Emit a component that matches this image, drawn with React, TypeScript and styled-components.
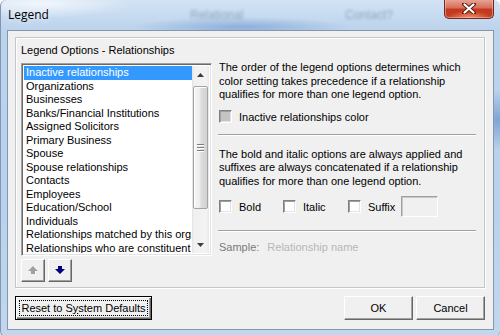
import React from 'react'
import styled, { createGlobalStyle } from 'styled-components'

const GlobalStyle = createGlobalStyle`
  html, body {
    margin: 0;
    padding: 0;
    overflow: hidden;
    background: #ffffff;
  }
  body {
    font-family: "Liberation Sans", Arial, sans-serif;
    font-size: 11px;
    color: #000;
  }
`

const items = [
  'Inactive relationships',
  'Organizations',
  'Businesses',
  'Banks/Financial Institutions',
  'Assigned Solicitors',
  'Primary Business',
  'Spouse',
  'Spouse relationships',
  'Contacts',
  'Employees',
  'Education/School',
  'Individuals',
  'Relationships matched by this org.',
  'Relationships who are constituent',
]

const Window = styled.div`
  width: 500px;
  height: 338px;
  box-sizing: border-box;
  display: flex;
  flex-direction: column;
  border-radius: 6px 6px 7px 7px;
  border-left: 1px solid #7e97b4;
  border-bottom: 1px solid #4e6581;
  background:
    radial-gradient(ellipse 110px 10px at 240px 27px, rgba(80, 130, 195, 0.45), transparent),
    radial-gradient(ellipse 90px 14px at 40px 4px, rgba(255, 255, 255, 0.7), transparent),
    radial-gradient(ellipse 60px 30px at 497px 120px, rgba(70, 120, 190, 0.5), transparent),
    linear-gradient(#d3e3f4, #bcd3ec 30px, #b9d1eb 200px, #c2d7ee);
  overflow: hidden;
`

const TitleBar = styled.div`
  height: 30px;
  flex: none;
  display: flex;
  align-items: flex-start;
`

const TitleText = styled.div`
  font-family: "Open Sans", "Noto Sans", sans-serif;
  font-size: 12px;
  line-height: 16px;
  padding: 7px 0 0 7px;
  width: 182px;
  color: #000;
  text-shadow: 0 0 6px rgba(255, 255, 255, 0.9);
`

const GhostText = styled.div<{ $width: number }>`
  width: ${p => p.$width}px;
  padding-top: 8px;
  font-size: 12px;
  color: #51647c;
  opacity: 0.45;
  filter: blur(1.4px);
`

const CloseButton = styled.div`
  margin-left: auto;
  margin-right: 6px;
  margin-top: -1px;
  width: 50px;
  height: 20px;
  box-sizing: border-box;
  border: 1px solid #6d2b22;
  border-top: none;
  border-radius: 0 0 5px 5px;
  background:
    radial-gradient(ellipse 22px 7px at 50% 100%, rgba(255, 170, 120, 0.8), transparent),
    linear-gradient(#e9a99a, #d86f5c 45%, #c4391f 55%, #c53d25);
  box-shadow: inset 0 0 0 1px rgba(255, 210, 200, 0.45);
  display: flex;
  align-items: center;
  justify-content: center;
`

const Client = styled.div`
  flex: 1;
  margin: 0 6px 7px 6px;
  border: 1px solid #8497ae;
  background: #f0f0f0;
  display: flex;
  flex-direction: column;
  padding: 6px 8px 0 7px;
`

const GroupBox = styled.div`
  height: 251px;
  box-sizing: border-box;
  border: 1px solid #c3c7cb;
  box-shadow: inset 1px 1px #ffffff, 1px 1px #ffffff;
  padding: 5px 8px 0 5px;
  display: flex;
  flex-direction: column;
`

const GroupLabel = styled.div`
  line-height: 14px;
  height: 14px;
`

const GroupBody = styled.div`
  margin-top: 4px;
  display: flex;
  gap: 6px;
`

const LeftColumn = styled.div`
  width: 191px;
  display: flex;
  flex-direction: column;
  padding-top: 2px;
`

const ListBox = styled.div`
  height: 193px;
  box-sizing: border-box;
  border: 1px solid;
  border-color: #a0a0a0 #ffffff #ffffff #a0a0a0;
  box-shadow: inset 1px 1px #696969, inset -1px -1px #e3e3e3;
  background: #fff;
  padding: 2px;
  display: flex;
`

const ListItems = styled.div`
  width: 170px;
  overflow: hidden;
`

const ListItem = styled.div<{ $selected?: boolean }>`
  height: 13.5px;
  line-height: 13.5px;
  padding-left: 2px;
  white-space: nowrap;
  overflow: hidden;
  background: ${p => (p.$selected ? '#3399ff' : 'transparent')};
  color: ${p => (p.$selected ? '#ffffff' : '#000000')};
`

const ScrollBar = styled.div`
  width: 17px;
  display: flex;
  flex-direction: column;
  background: linear-gradient(to right, #e3e3e3, #f0f0f0 2px, #f3f3f3 14px, #e8e8e8);
`

const ScrollArrow = styled.div`
  height: 17px;
  flex: none;
  display: flex;
  align-items: center;
  justify-content: center;
`

const ScrollTrack = styled.div`
  flex: 1;
  padding: 3px 1px 0 1px;
`

const ScrollThumb = styled.div`
  height: 123px;
  box-sizing: border-box;
  border: 1px solid #a3a3a3;
  border-radius: 2px;
  background: linear-gradient(to right, #f7f7f7, #ececec 45%, #dcdcdc 55%, #d2d2d2);
  box-shadow: inset 1px 1px #ffffff;
  display: flex;
  flex-direction: column;
  align-items: center;
  justify-content: center;
  gap: 2px;
`

const Grip = styled.div`
  width: 7px;
  height: 1px;
  background: #7d7d7d;
  box-shadow: 0 1px #ffffff;
`

const MoveButtons = styled.div`
  margin-top: 3px;
  display: flex;
  gap: 3px;
`

const MoveButton = styled.div`
  width: 24px;
  height: 23px;
  box-sizing: border-box;
  border: 1px solid;
  border-color: #ffffff #696969 #696969 #ffffff;
  box-shadow: inset -1px -1px #a0a0a0, inset 1px 1px #f0f0f0;
  background: #f0f0f0;
  display: flex;
  align-items: center;
  justify-content: center;
`

const RightColumn = styled.div`
  flex: 1;
  display: flex;
  flex-direction: column;
`

const Paragraph = styled.div<{ $top?: number }>`
  margin-top: ${p => p.$top ?? 0}px;
  line-height: 13.6px;
  padding-left: 1px;
`

const CheckRow = styled.div<{ $top: number; $height: number }>`
  margin-top: ${p => p.$top}px;
  height: ${p => p.$height}px;
  display: flex;
  align-items: center;
  padding-left: 1px;
`

const CheckItem = styled.div<{ $width?: number }>`
  width: ${p => (p.$width ? `${p.$width}px` : 'auto')};
  display: flex;
  align-items: center;
  gap: 7px;
`

const CheckBox = styled.div<{ $disabled?: boolean }>`
  width: 13px;
  height: 13px;
  box-sizing: border-box;
  border: 1px solid;
  border-color: #808080 #ffffff #ffffff #808080;
  box-shadow: inset 1px 1px #a0a0a0, inset -1px -1px #e3e3e3;
  background: ${p => (p.$disabled ? '#c4c4c4' : '#ffffff')};
`

const Separator = styled.div<{ $top: number }>`
  margin-top: ${p => p.$top}px;
  height: 1px;
  background: #a0a0a0;
  border-bottom: 1px solid #ffffff;
`

const SuffixInput = styled.div`
  margin-left: 6px;
  width: 37px;
  height: 21px;
  box-sizing: border-box;
  border: 1px solid;
  border-color: #a0a0a0 #ffffff #ffffff #a0a0a0;
  box-shadow: inset 1px 1px #c8c8c8;
  background: #f0f0f0;
`

const SampleRow = styled.div`
  margin-top: 8.5px;
  line-height: 13.6px;
  padding-left: 1px;
  display: flex;
  gap: 8px;
`

const SampleLabel = styled.span`
  color: #7a7a7a;
`

const SampleValue = styled.span`
  color: #b7b7b7;
`

const Footer = styled.div`
  margin-top: 8px;
  display: flex;
  align-items: center;
`

const Button = styled.div<{ $width: number; $default?: boolean }>`
  width: ${p => p.$width}px;
  height: 24px;
  box-sizing: border-box;
  border: 1px solid;
  border-color: ${p => (p.$default ? '#000000' : '#ffffff #696969 #696969 #ffffff')};
  box-shadow: ${p =>
    p.$default
      ? 'inset 1px 1px #ffffff, inset -1px -1px #696969, inset -2px -2px #a0a0a0'
      : 'inset -1px -1px #a0a0a0, inset 1px 1px #f0f0f0'};
  background: #f0f0f0;
  display: flex;
  align-items: center;
  justify-content: center;
  padding: 3px;
  & + & {
    margin-left: 3px;
  }
`

const FocusRect = styled.div`
  flex: 1;
  align-self: stretch;
  border: 1px dotted #000;
  display: flex;
  align-items: center;
  justify-content: center;
  line-height: 13px;
`

const Mnemonic = styled.span`
  text-decoration: underline;
`

const Spacer = styled.div`
  flex: 1;
`

const Arrow = ({ dir, color, glow }: { dir: 'up' | 'down'; color: string; glow?: boolean }) => (
  <svg width="11" height="9" viewBox="0 0 11 9">
    {glow && (
      <polygon
        points={dir === 'up' ? '4,8 8,8 8,5 11,5 6,0 1,5 4,5' : '4,1 8,1 8,4 11,4 6,9 1,4 4,4'}
        fill="#ffffff"
      />
    )}
    <polygon
      points={dir === 'up' ? '3,8 7,8 7,5 10,5 5,0 0,5 3,5' : '3,0 7,0 7,3 10,3 5,8 0,3 3,3'}
      fill={color}
    />
  </svg>
)

const Tri = ({ dir }: { dir: 'up' | 'down' }) => (
  <svg width="7" height="4" viewBox="0 0 7 4">
    <polygon points={dir === 'up' ? '3.5,0 7,4 0,4' : '0,0 7,0 3.5,4'} fill="#3c3c3c" />
  </svg>
)

export default function App() {
  return (
    <>
      <GlobalStyle />
      <Window>
        <TitleBar>
          <TitleText>Legend</TitleText>
          <GhostText $width={155}>Relational</GhostText>
          <GhostText $width={60}>Contact?</GhostText>
          <CloseButton>
            <svg width="14" height="11" viewBox="0 0 14 11">
              <path d="M2 1 L12 10 M12 1 L2 10" stroke="#5a1a12" strokeWidth="4" strokeLinecap="round" />
              <path d="M2.5 1.5 L11.5 9.5 M11.5 1.5 L2.5 9.5" stroke="#ffffff" strokeWidth="2.2" strokeLinecap="round" />
            </svg>
          </CloseButton>
        </TitleBar>
        <Client>
          <GroupBox>
            <GroupLabel>Legend Options - Relationships</GroupLabel>
            <GroupBody>
              <LeftColumn>
                <ListBox>
                  <ListItems>
                    {items.map((item, i) => (
                      <ListItem key={item} $selected={i === 0}>
                        {item}
                      </ListItem>
                    ))}
                  </ListItems>
                  <ScrollBar>
                    <ScrollArrow>
                      <Tri dir="up" />
                    </ScrollArrow>
                    <ScrollTrack>
                      <ScrollThumb>
                        <Grip />
                        <Grip />
                        <Grip />
                      </ScrollThumb>
                    </ScrollTrack>
                    <ScrollArrow>
                      <Tri dir="down" />
                    </ScrollArrow>
                  </ScrollBar>
                </ListBox>
                <MoveButtons>
                  <MoveButton>
                    <Arrow dir="up" color="#a0a0a0" glow />
                  </MoveButton>
                  <MoveButton>
                    <Arrow dir="down" color="#000080" />
                  </MoveButton>
                </MoveButtons>
              </LeftColumn>
              <RightColumn>
                <Paragraph>
                  The order of the legend options determines which
                  <br />
                  color setting takes precedence if a relationship
                  <br />
                  qualifies for more than one legend option.
                </Paragraph>
                <CheckRow $top={7} $height={16}>
                  <CheckItem>
                    <CheckBox $disabled />
                    <span>Inactive relationships color</span>
                  </CheckItem>
                </CheckRow>
                <Separator $top={9} />
                <Paragraph $top={12}>
                  The bold and italic options are always applied and
                  <br />
                  suffixes are always concatenated if a relationship
                  <br />
                  qualifies for more than one legend option.
                </Paragraph>
                <CheckRow $top={7.5} $height={21}>
                  <CheckItem $width={64}>
                    <CheckBox />
                    <span>Bold</span>
                  </CheckItem>
                  <CheckItem $width={65}>
                    <CheckBox />
                    <span>Italic</span>
                  </CheckItem>
                  <CheckItem>
                    <CheckBox />
                    <span>Suffix</span>
                  </CheckItem>
                  <SuffixInput />
                </CheckRow>
                <Separator $top={13} />
                <SampleRow>
                  <SampleLabel>Sample:</SampleLabel>
                  <SampleValue>Relationship name</SampleValue>
                </SampleRow>
              </RightColumn>
            </GroupBody>
          </GroupBox>
          <Footer>
            <Button $width={137} $default>
              <FocusRect>
                Reset to S<Mnemonic>y</Mnemonic>stem Defaults
              </FocusRect>
            </Button>
            <Spacer />
            <Button $width={69}>OK</Button>
            <Button $width={69}>Cancel</Button>
          </Footer>
        </Client>
      </Window>
    </>
  )
}
